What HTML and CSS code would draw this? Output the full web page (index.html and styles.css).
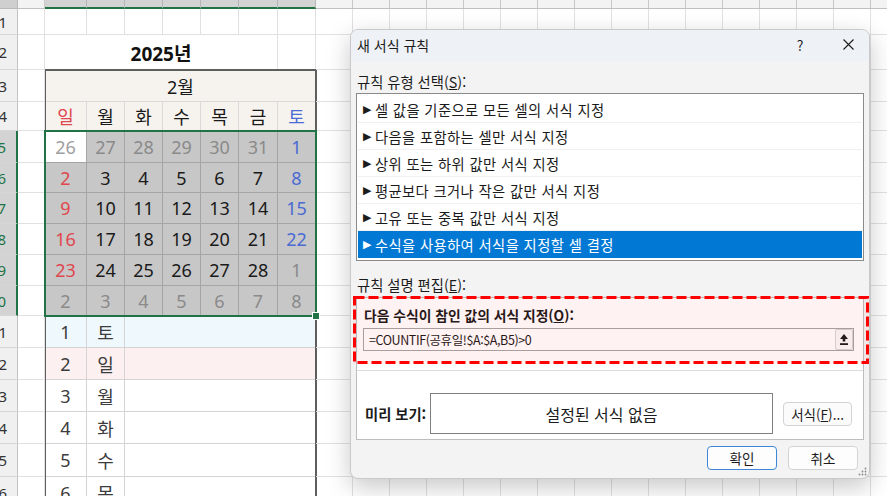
FILE: index.html
```html
<!DOCTYPE html>
<html lang="ko">
  <head>
    <meta charset="UTF-8" />
    <title>새 서식 규칙</title>
    <link rel="stylesheet" href="styles.css">
  </head>
  <body>
    <div class="sheet">
      <!-- column headers -->
      <div class="corner"></div>
      <div class="ch ch-a"></div>
      <div class="cols ch-cal">
        <div class="hc"></div><div class="hc"></div><div class="hc"></div><div class="hc"></div>
        <div class="hc"></div><div class="hc"></div><div class="hc"></div>
      </div>
      <div class="rest hd"></div>

      <!-- rows 1 and 2 of the calendar columns -->
      <div class="cols top">
        <div class="e"></div><div class="e"></div><div class="e"></div><div class="e"></div>
        <div class="e"></div><div class="e"></div><div class="e"></div>
        <div class="year">2025년</div>
        <div class="e"></div>
      </div>

      <!-- calendar block -->
      <div class="cols calendar">
        <div class="month">2월</div>
        <div class="wd sun">일</div>
        <div class="wd">월</div>
        <div class="wd">화</div>
        <div class="wd">수</div>
        <div class="wd">목</div>
        <div class="wd">금</div>
        <div class="wd sat">토</div>

        <div class="cols dates">
          <div class="d act mute">26</div><div class="d mute">27</div><div class="d mute">28</div><div class="d mute">29</div><div class="d mute">30</div><div class="d mute">31</div><div class="d sat">1</div>
          <div class="d sun">2</div><div class="d">3</div><div class="d">4</div><div class="d">5</div><div class="d">6</div><div class="d">7</div><div class="d sat">8</div>
          <div class="d sun">9</div><div class="d">10</div><div class="d">11</div><div class="d">12</div><div class="d">13</div><div class="d">14</div><div class="d sat">15</div>
          <div class="d sun">16</div><div class="d">17</div><div class="d">18</div><div class="d">19</div><div class="d">20</div><div class="d">21</div><div class="d sat">22</div>
          <div class="d sun">23</div><div class="d">24</div><div class="d">25</div><div class="d">26</div><div class="d">27</div><div class="d">28</div><div class="d mute">1</div>
          <div class="d mute">2</div><div class="d mute">3</div><div class="d mute">4</div><div class="d mute">5</div><div class="d mute">6</div><div class="d mute">7</div><div class="d mute">8</div>
        </div>

        <div class="ln blue">1</div><div class="lw blue">토</div><div class="lb blue"></div>
        <div class="ln pink">2</div><div class="lw pink">일</div><div class="lb pink"></div>
        <div class="ln">3</div><div class="lw">월</div><div class="lb"></div>
        <div class="ln">4</div><div class="lw">화</div><div class="lb"></div>
        <div class="ln">5</div><div class="lw">수</div><div class="lb"></div>
        <div class="ln">6</div><div class="lw">목</div><div class="lb"></div>
      </div>

      <!-- row headers, column A and the empty columns on the right -->
      <div class="rh">1</div><div class="ca"></div><div class="rest"></div>
      <div class="rh">2</div><div class="ca"></div><div class="rest"></div>
      <div class="rh">3</div><div class="ca"></div><div class="rest"></div>
      <div class="rh">4</div><div class="ca"></div><div class="rest"></div>
      <div class="rh sel">5</div><div class="ca"></div><div class="rest"></div>
      <div class="rh sel">6</div><div class="ca"></div><div class="rest"></div>
      <div class="rh sel">7</div><div class="ca"></div><div class="rest"></div>
      <div class="rh sel">8</div><div class="ca"></div><div class="rest"></div>
      <div class="rh sel">9</div><div class="ca"></div><div class="rest"></div>
      <div class="rh sel">10</div><div class="ca"></div><div class="rest"></div>
      <div class="rh">11</div><div class="ca"></div><div class="rest"></div>
      <div class="rh">12</div><div class="ca"></div><div class="rest"></div>
      <div class="rh">13</div><div class="ca"></div><div class="rest"></div>
      <div class="rh">14</div><div class="ca"></div><div class="rest"></div>
      <div class="rh">15</div><div class="ca"></div><div class="rest"></div>
      <div class="rh">16</div><div class="ca"></div><div class="rest"></div>
    </div>

    <div class="dialog">
      <div class="titlebar">
        <span class="title">새 서식 규칙</span>
        <span class="help">?</span>
        <span class="close">
          <svg width="11" height="11" viewBox="0 0 11 11">
            <path d="M0.5 0.5L10.5 10.5M10.5 0.5L0.5 10.5" stroke="#1b1b1b" stroke-width="1.1" fill="none" />
          </svg>
        </span>
      </div>
      <div class="dbody">
        <div class="label">규칙 유형 선택(<u>S</u>):</div>
        <ul class="rules">
          <li><span class="tri">▶</span>셀 값을 기준으로 모든 셀의 서식 지정</li>
          <li><span class="tri">▶</span>다음을 포함하는 셀만 서식 지정</li>
          <li><span class="tri">▶</span>상위 또는 하위 값만 서식 지정</li>
          <li><span class="tri">▶</span>평균보다 크거나 작은 값만 서식 지정</li>
          <li><span class="tri">▶</span>고유 또는 중복 값만 서식 지정</li>
          <li class="on"><span class="tri">▶</span>수식을 사용하여 서식을 지정할 셀 결정</li>
        </ul>
        <div class="label second">규칙 설명 편집(<u>E</u>):</div>
        <div class="panel">
          <div class="formula">
            <div class="blabel">다음 수식이 참인 값의 서식 지정(<u>O</u>):</div>
            <div class="finput">
              <span class="ftext">=COUNTIF(공휴일!$A:$A,B5)&gt;0</span>
              <span class="pick">
                <svg width="8" height="11" viewBox="0 0 8 11">
                  <path d="M4 0L8 5H5.3V7.6H2.7V5H0Z" fill="#1b1b1b" />
                  <rect x="0" y="9.2" width="8" height="1.8" fill="#1b1b1b" />
                </svg>
              </span>
            </div>
            <div class="redbox">
              <svg width="516" height="68" viewBox="0 0 516 68">
                <rect x="1.5" y="1.5" width="513" height="65" fill="none" stroke="#ff0000" stroke-width="3" stroke-dasharray="10 4" />
              </svg>
            </div>
          </div>
          <div class="preview">
            <span class="pv-label">미리 보기:</span>
            <div class="pbox">설정된 서식 없음</div>
            <button class="btn fmt">서식(<u>F</u>)...</button>
          </div>
        </div>
        <div class="actions">
          <button class="btn primary">확인</button>
          <button class="btn">취소</button>
        </div>
      </div>
      <svg class="grip" width="9" height="9" viewBox="0 0 9 9">
        <circle cx="7.5" cy="1.5" r="0.9" fill="#8a8a8a" />
        <circle cx="4.5" cy="4.5" r="0.9" fill="#8a8a8a" />
        <circle cx="7.5" cy="4.5" r="0.9" fill="#8a8a8a" />
        <circle cx="1.5" cy="7.5" r="0.9" fill="#8a8a8a" />
        <circle cx="4.5" cy="7.5" r="0.9" fill="#8a8a8a" />
        <circle cx="7.5" cy="7.5" r="0.9" fill="#8a8a8a" />
      </svg>
    </div>
  </body>
</html>
```

FILE: styles.css
```css
* {
  box-sizing: border-box;
}
html,
body {
  margin: 0;
  padding: 0;
  height: 100%;
}
body {
  position: relative;
  overflow: hidden;
  background: #fff;
  font-family: "Noto Sans", "Noto Sans CJK KR", sans-serif;
  color: #1a1a1a;
}

/* spreadsheet */
.sheet {
  display: grid;
  width: 887px;
  grid-template-columns: 18px 27px 271px 1fr;
  grid-template-rows: 9px 26px 35px 32px 29px 32px 30px 31px 31px 31px 30px 32px 32px 32px 32px 33px 33px;
}
.cols {
  display: grid;
  grid-template-columns: 42px 38px 38px 38px 38px 39px 38px;
}
.corner {
  grid-column: 1;
  background: #cfcfcf;
  border-right: 1px solid #b9b9b9;
  border-bottom: 1px solid #b9b9b9;
}
.ch {
  grid-column: 2;
  background: #f3f3f3;
  border-right: 1px solid #c8c8c8;
  border-bottom: 1px solid #c0c0c0;
}
.ch-cal {
  grid-column: 3;
  grid-row: 1;
}
.hc {
  background: #d3d3d3;
  border-right: 1px solid #b6b6b6;
  border-bottom: 2px solid #217346;
}
.rh {
  grid-column: 1;
  display: flex;
  align-items: center;
  justify-content: flex-end;
  padding-right: 10px;
  overflow: hidden;
  white-space: nowrap;
  background: #f0f0f0;
  border-right: 1px solid #c2c2c2;
  border-bottom: 1px solid #d6d6d6;
  font-size: 15px;
  color: #333;
}
.rh.sel {
  background: #d3d3d3;
  color: #217346;
  border-right: 2px solid #217346;
}
.ca {
  grid-column: 2;
  border-right: 1px solid #e1e1e1;
  border-bottom: 1px solid #e1e1e1;
}
.rest {
  grid-column: 4;
  border-bottom: 1px solid #e1e1e1;
  background: linear-gradient(to right, transparent 36px, #e1e1e1 36px) 0 0 / 37px 100%;
}
.rest.hd {
  background: linear-gradient(to right, #f3f3f3 36px, #c8c8c8 36px) 0 0 / 37px 100%;
  border-bottom-color: #c0c0c0;
}

.top {
  grid-column: 3;
  grid-row: 2 / 4;
  grid-template-rows: 26px 35px;
}
.e {
  border-right: 1px solid #e1e1e1;
  border-bottom: 1px solid #e1e1e1;
}
.year {
  grid-column: span 6;
  display: flex;
  align-items: center;
  justify-content: center;
  border-right: 1px solid #e1e1e1;
  font-size: 19px;
  font-weight: bold;
  color: #111;
}

.calendar {
  grid-column: 3;
  grid-row: 4 / 18;
  grid-template-rows: 32px 29px 32px 30px 31px 31px 31px 30px 32px 32px 32px 32px 33px 33px;
  outline: 2px solid #5e5e5e;
  outline-offset: -1px;
  font-size: 18px;
}
.month {
  grid-column: 1 / -1;
  display: flex;
  align-items: center;
  justify-content: center;
  background: #f6f3ee;
  border-bottom: 1px solid #dadada;
  color: #1a1a1a;
}
.wd {
  display: flex;
  align-items: center;
  justify-content: center;
  background: #f6f3ee;
  border-right: 1px solid #dadada;
  border-bottom: 1px solid #5e5e5e;
}
.sun {
  color: #e0464d;
}
.sat {
  color: #4a6bd3;
}
.dates {
  grid-column: 1 / -1;
  grid-row: 3 / 9;
  grid-template-rows: 32px 30px 31px 31px 31px 30px;
  position: relative;
  z-index: 1;
  outline: 2px solid #217346;
  outline-offset: -1px;
}
.dates::after {
  content: "";
  position: absolute;
  right: -4px;
  bottom: -4px;
  width: 6px;
  height: 6px;
  background: #217346;
  border: 1px solid #fff;
}
.d {
  display: flex;
  align-items: center;
  justify-content: center;
  background: #c7c7c7;
  border-right: 1px solid #a5a5a5;
  border-bottom: 1px solid #a5a5a5;
}
.d.mute {
  color: #8a8a8a;
}
.d.act {
  background: #fff;
  color: #a0a0a0;
}

.ln,
.lw,
.lb {
  display: flex;
  align-items: center;
  justify-content: center;
  border-bottom: 1px solid #d4d4d4;
  color: #3c3c3c;
}
.ln,
.lw {
  border-right: 1px solid #d4d4d4;
}
.lb {
  grid-column: span 5;
}
.blue {
  background: #eff8fd;
}
.pink {
  background: #fdf0f0;
}

/* dialog */
.dialog {
  position: absolute;
  left: 350px;
  top: 29px;
  width: 520px;
  height: 450px;
  display: flex;
  flex-direction: column;
  overflow: hidden;
  background: #f3f3f3;
  border: 1px solid #c9c9c9;
  border-radius: 8px;
  box-shadow: 0 8px 24px rgba(0, 0, 0, 0.22);
  font-family: "Noto Sans CJK KR", sans-serif;
  font-size: 14.3px;
  color: #1b1b1b;
}
.titlebar {
  height: 31px;
  display: flex;
  align-items: center;
  padding: 0 15px 2px 6px;
  background: #eef1f6;
}
.title {
  flex: 1;
  font-size: 14px;
}
.help {
  width: 20px;
  text-align: center;
  font-size: 14px;
}
.close {
  display: flex;
  margin-left: 33px;
}
.dbody {
  flex: 1;
  display: flex;
  flex-direction: column;
  padding: 12px 5px 0;
}
.label {
  line-height: 18px;
  padding-left: 1px;
}
.label.second {
  margin-top: 15px;
}
.rules {
  margin: 2px 0 0;
  padding: 2px 1px;
  list-style: none;
  background: #fff;
  border: 1px solid #8a8a8a;
}
.rules li {
  height: 27px;
  display: flex;
  align-items: center;
  padding-left: 5px;
  border-bottom: 1px solid #f1f1f1;
  letter-spacing: 0.4px;
}
.rules li.on {
  background: #0078d4;
  color: #fff;
  border-bottom-color: #0078d4;
}
.tri {
  font-family: "DejaVu Sans", sans-serif;
  font-size: 11px;
  margin-right: 3px;
}
.panel {
  margin-top: 3px;
  background: #fff;
  border: 1px solid #bdbdbd;
}
.formula {
  position: relative;
  height: 73px;
  padding: 8px 9px 0 6px;
  border-bottom: 1px solid #dcdcdc;
}
.blabel {
  line-height: 18px;
  margin-left: 1px;
  font-size: 13.8px;
  font-weight: bold;
}
.finput {
  display: flex;
  align-items: center;
  height: 23px;
  margin-top: 4px;
  padding-left: 5px;
  background: #fff;
  border: 1px solid #a6a6a6;
}
.ftext {
  flex: 1;
  font-size: 12.5px;
  letter-spacing: -0.4px;
}
.pick {
  width: 18px;
  height: 21px;
  display: flex;
  align-items: center;
  justify-content: center;
  background: #f9f9f9;
  border: 1px solid #d6d6d6;
  border-radius: 2px;
}
.redbox {
  position: absolute;
  left: -4px;
  top: -2px;
  width: 516px;
  height: 68px;
  background: rgba(255, 0, 0, 0.05);
}
.redbox svg {
  display: block;
}
.preview {
  height: 68px;
  display: flex;
  align-items: center;
  padding: 22px 11px 5px 8px;
}
.pv-label {
  width: 65px;
  font-weight: bold;
}
.pbox {
  width: 344px;
  height: 41px;
  display: flex;
  align-items: center;
  justify-content: center;
  background: #fff;
  border: 1px solid #808080;
  font-size: 16px;
}
.btn {
  height: 24px;
  padding: 0;
  font-family: inherit;
  font-size: 13.5px;
  color: #1b1b1b;
  background: #fdfdfd;
  border: 1px solid #d3d3d3;
  border-radius: 4px;
}
.btn.fmt {
  width: 69px;
  margin-left: 10px;
  background: #fbfbfb;
}
.actions {
  display: flex;
  justify-content: flex-end;
  gap: 11px;
  margin-top: 6px;
  padding-right: 6px;
}
.actions .btn {
  width: 70px;
}
.btn.primary {
  border-color: #3d87d6;
}
.grip {
  position: absolute;
  right: 2px;
  bottom: 2px;
}
```
